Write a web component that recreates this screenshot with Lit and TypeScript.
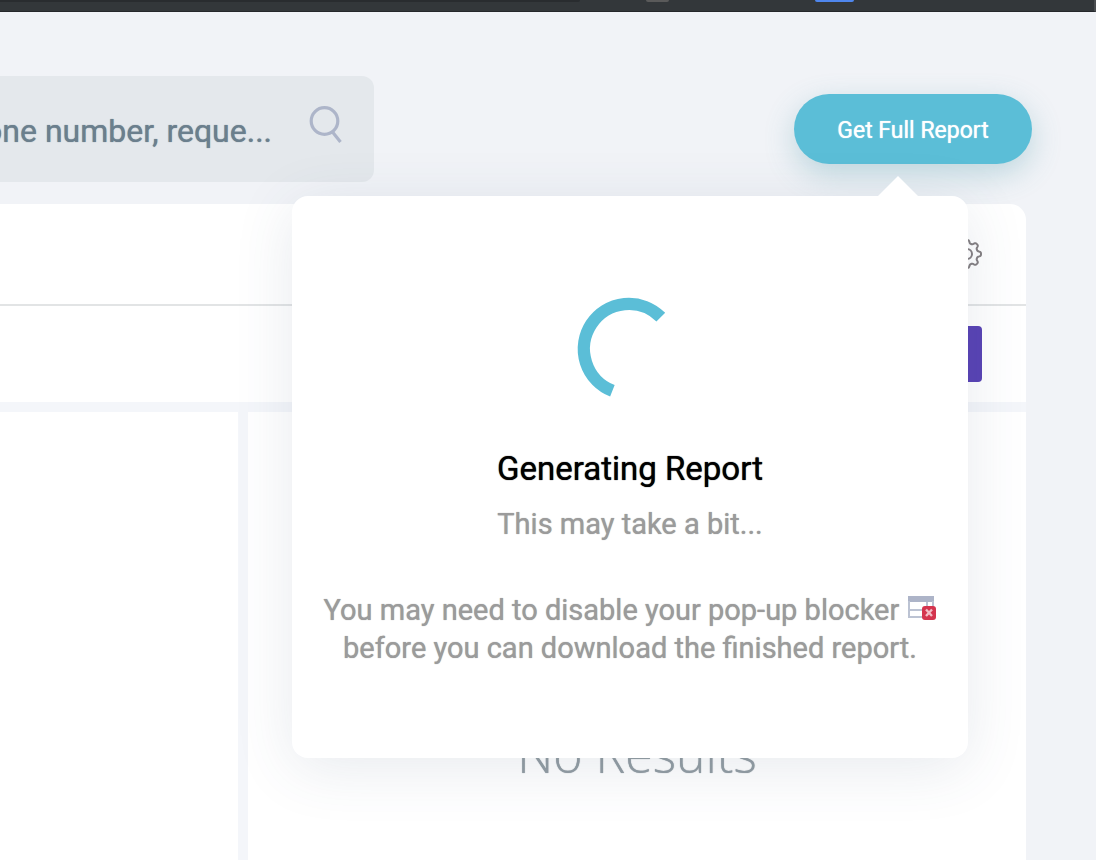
import { LitElement, html, css, svg } from "lit";
import { customElement, property } from "lit/decorators.js";

const searchIcon = svg`<svg class="icon" viewBox="0 0 34 40" width="34" height="40" fill="none" stroke="#adb5c9" stroke-width="3.2">
  <circle cx="16.5" cy="17" r="13.3"/>
  <path d="M24.5 28 32.5 38"/>
</svg>`;

const gearPath = (() => {
  const points: string[] = [];
  for (let i = 0; i <= 160; i++) {
    const a = (i / 160) * Math.PI * 2;
    const wave = Math.cos(8 * a);
    const r = 12.4 + 1.7 * Math.tanh(wave * 1.8);
    points.push(`${(16 + r * Math.cos(a)).toFixed(2)} ${(16 + r * Math.sin(a)).toFixed(2)}`);
  }
  return `M${points.join("L")}Z`;
})();

@customElement("report-popover")
export class ReportPopover extends LitElement {
  @property() heading = "";
  @property() note = "";

  static styles = css`
    :host {
      display: block;
      box-sizing: border-box;
      padding: 97px 24px 91px;
      border-radius: 16px;
      background: #fff;
      box-shadow: 0 10px 60px rgba(60, 80, 115, 0.12);
      text-align: center;
      color: #9b9b9b;
      font-size: 29px;
      line-height: 38px;
      font-weight: 400;
      text-shadow: 0 0 1px currentColor;
    }
    .caret {
      position: absolute;
      right: 50px;
      bottom: 100%;
      width: 40px;
      height: 20px;
      background: #fff;
      clip-path: polygon(50% 0, 100% 100%, 0 100%);
    }
    .spinner {
      display: block;
      margin: 0 auto;
    }
    h2 {
      margin: 47px 0 0;
      font-size: 33px;
      line-height: 42px;
      font-weight: 400;
      color: #000;
      text-shadow: 0 0 1px currentColor;
    }
    p {
      margin: 15px 0 0;
    }
    .hint {
      margin-top: 48px;
    }
    .blocked {
      margin-left: 2px;
      vertical-align: 0;
    }
  `;

  render() {
    return html`
      <span class="caret"></span>
      <svg class="spinner" viewBox="-53 -56 108 108" width="108" height="108" fill="none" stroke="#5bbed7" stroke-width="12.4" aria-label="Loading">
        <path d="M-16.6 41.8A45 45 0 1 1 31.8 -31.8" />
      </svg>
      <h2>${this.heading}</h2>
      <p>${this.note}</p>
      <p class="hint">
        You may need to disable your pop-up blocker
        <svg class="blocked" viewBox="0 0 28 24" width="28" height="24">
          <path fill="#fff" d="M1 1h24v20H1z" />
          <path fill="#adb4c8" d="M0 0h26v6H0z" />
          <path fill="none" stroke="#bcc3d3" stroke-width="2" d="M1 5v16H15M25 5v6M19 6v5M2 14h13" />
          <rect x="14" y="10" width="14" height="14" rx="3" fill="#d4344e" />
          <path stroke="#f3bcc6" stroke-width="2.4" d="m18 13.5 6 6.5M24 13.5 18 20" />
        </svg><br />
        before you can download the finished report.
      </p>
    `;
  }
}

@customElement("app-root")
export class AppRoot extends LitElement {
  static styles = css`
    :host {
      display: flex;
      flex-direction: column;
      box-sizing: border-box;
      min-height: 100vh;
      overflow: hidden;
      background: #f1f3f7;
      font-family: Roboto, "Liberation Sans", sans-serif;
    }
    * {
      box-sizing: border-box;
    }
    .chrome {
      display: flex;
      height: 12px;
      background: #33373a;
      border-bottom: 1px solid #25272b;
      border-right: 2px solid #4a4d50;
    }
    .address {
      flex: 0 0 580px;
      height: 2px;
      background: #292c2f;
      border-radius: 0 0 8px 0;
    }
    .tab {
      width: 23px;
      height: 2px;
      margin-left: 66px;
      background: #5a5a5a;
      border-radius: 0 0 3px 3px;
    }
    .badge {
      width: 39px;
      height: 2px;
      margin-left: 146px;
      background: #4f86ec;
      border-radius: 0 0 3px 3px;
    }
    header {
      display: flex;
      justify-content: space-between;
      align-items: center;
      padding: 64px 64px 22px 0;
    }
    .search {
      display: flex;
      align-items: center;
      gap: 36px;
      height: 106px;
      margin-left: -28px;
      padding-right: 32px;
      border-radius: 0 12px 12px 0;
      background: #e4e8ec;
    }
    .search input {
      width: 300px;
      height: 52px;
      padding: 4px 0 0;
      border: 0;
      outline: 0;
      background: none;
      font: 400 32px/48px Roboto, sans-serif;
      text-align: right;
      text-shadow: 0 0 1px currentColor;
      color: #6b7f8d;
    }
    .search input::placeholder {
      color: #6b7f8d;
      opacity: 1;
    }
    .icon {
      margin-bottom: 10px;
    }
    .action {
      position: relative;
    }
    .primary {
      display: block;
      width: 238px;
      height: 70px;
      padding: 4px 0 0;
      border: 0;
      border-radius: 35px;
      background: #5bbed7;
      box-shadow: 0 10px 30px rgba(70, 150, 165, 0.3);
      color: #fff;
      font: 400 23px/28px Roboto, sans-serif;
      text-shadow: 0 0 1px currentColor;
    }
    report-popover {
      position: absolute;
      z-index: 2;
      top: calc(100% + 32px);
      right: 64px;
      width: 676px;
    }
    main {
      flex: 1;
      display: flex;
      flex-direction: column;
      margin-right: 70px;
      border-radius: 0 16px 0 0;
      background: #fff;
    }
    .bar {
      display: flex;
      justify-content: flex-end;
      align-items: center;
      height: 102px;
      padding-right: 43px;
      border-bottom: 2px solid #e2e4e5;
    }
    .bar button {
      display: flex;
      padding: 0;
      border: 0;
      background: none;
    }
    .filters {
      display: flex;
      justify-content: flex-end;
      padding: 20px 44px;
    }
    .filters button {
      width: 120px;
      height: 56px;
      border: 0;
      border-radius: 4px;
      background: #5943b5;
    }
    .columns {
      flex: 1;
      display: grid;
      grid-template-columns: 238px 1fr;
      gap: 10px;
      padding-top: 10px;
      background: #f4f6fa;
    }
    .columns section {
      background: #fff;
    }
    .empty {
      margin: 0;
      padding-top: 310px;
      text-align: center;
      font: 300 50px/64px "Open Sans", sans-serif;
      color: #939da3;
      text-shadow: 0 0 1px currentColor;
    }
  `;

  render() {
    return html`
      <div class="chrome">
        <span class="address"></span><span class="tab"></span><span class="badge"></span>
      </div>
      <header>
        <label class="search">
          <input type="text" aria-label="Search" placeholder="one number, reque..." />
          ${searchIcon}
        </label>
        <div class="action">
          <button class="primary" type="button">Get Full Report</button>
          <report-popover heading="Generating Report" note="This may take a bit..."></report-popover>
        </div>
      </header>
      <main>
        <div class="bar">
          <button type="button" aria-label="Settings">
            <svg viewBox="0 0 32 32" width="32" height="32" fill="none" stroke="#858083" stroke-width="2">
              <path d=${gearPath} />
              <circle cx="16" cy="16" r="5" />
            </svg>
          </button>
        </div>
        <div class="filters"><button type="button" aria-label="Apply"></button></div>
        <div class="columns">
          <section></section>
          <section><p class="empty">No Results</p></section>
        </div>
      </main>
    `;
  }
}
